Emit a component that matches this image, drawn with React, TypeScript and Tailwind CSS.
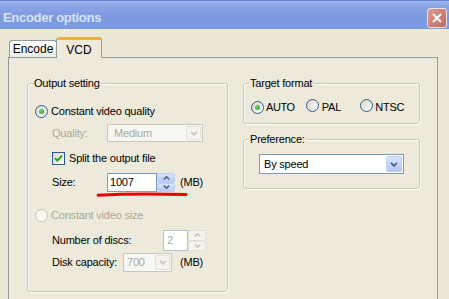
import React from "react";

function Radio({ checked, disabled }: { checked?: boolean; disabled?: boolean }) {
  return (
    <span
      className={
        disabled
          ? "relative inline-block w-[13px] h-[13px] shrink-0 rounded-full border border-[#CAC8BB] bg-[#F7F6F1]"
          : "relative inline-block w-[13px] h-[13px] shrink-0 rounded-full border border-[#2F5A87] bg-[linear-gradient(135deg,#D6D5CC,#FFFFFF)]"
      }
    >
      {checked && (
        <span className="absolute left-[3px] top-[3px] w-[5px] h-[5px] rounded-full bg-[radial-gradient(circle_at_35%_35%,#6CD36C,#21A121)]" />
      )}
    </span>
  );
}

function Checkbox() {
  return (
    <span className="relative inline-flex items-center justify-center w-[13px] h-[13px] shrink-0 border border-[#2F5A87] bg-[linear-gradient(135deg,#D6D5CC,#FFFFFF)]">
      <svg width="9" height="9" viewBox="0 0 9 9">
        <path d="M1 4.2 L3.4 6.6 L8 1.8" fill="none" stroke="#21A121" strokeWidth="2" />
      </svg>
    </span>
  );
}

function Chevron({ color }: { color: string }) {
  return (
    <svg width="8" height="5" viewBox="0 0 8 5">
      <path d="M1 0.8 L4 3.8 L7 0.8" fill="none" stroke={color} strokeWidth="1.8" />
    </svg>
  );
}

function ArrowUp({ color }: { color: string }) {
  return (
    <svg width="7" height="4" viewBox="0 0 7 4">
      <path d="M0.8 3.4 L3.5 0.8 L6.2 3.4" fill="none" stroke={color} strokeWidth="1.5" />
    </svg>
  );
}

function ArrowDown({ color }: { color: string }) {
  return (
    <svg width="7" height="4" viewBox="0 0 7 4">
      <path d="M0.8 0.6 L3.5 3.2 L6.2 0.6" fill="none" stroke={color} strokeWidth="1.5" />
    </svg>
  );
}

function Spinner({ disabled }: { disabled?: boolean }) {
  const btn = disabled
    ? "flex-1 flex items-center justify-center rounded-[2px] border border-[#E3E1D6] bg-[#F4F3EE]"
    : "flex-1 flex items-center justify-center rounded-[2px] border border-[#BCCDF3] bg-[linear-gradient(180deg,#D8E4FB,#B7CAF5)]";
  const c = disabled ? "#C9C7BA" : "#4D6185";
  return (
    <div className="flex flex-col w-[18px] h-full gap-0">
      <div className={btn}>
        <ArrowUp color={c} />
      </div>
      <div className={btn}>
        <ArrowDown color={c} />
      </div>
    </div>
  );
}

export default function App() {
  return (
    <div className="w-[449px] h-[299px] overflow-hidden bg-[#ECE9D8] font-['Liberation_Sans',Arial,sans-serif] text-[11px] tracking-[-0.2px] text-black flex flex-col">
      {/* Title bar */}
      <div className="h-[29px] shrink-0 flex items-center justify-between pt-[5px] pl-[3px] pr-[2px] bg-[linear-gradient(180deg,#9FB6EC_0%,#8AA5E6_20%,#7C98DF_60%,#7F9BE0_100%)] border-t border-[#6A86D0]">
        <span className="text-[13px] font-bold tracking-[-0.3px] text-[#D9E3F7] leading-none">
          Encoder options
        </span>
        <div className="w-[20px] h-[20px] rounded-[3px] border border-[#F1E3E3] bg-[linear-gradient(135deg,#D99A92,#C56A5F)] flex items-center justify-center">
          <svg width="12" height="12" viewBox="0 0 12 12">
            <path d="M2 2 L10 10 M10 2 L2 10" stroke="#FFFFFF" strokeWidth="2" />
          </svg>
        </div>
      </div>

      {/* Body */}
      <div className="flex-1 flex flex-col pt-[9px] pl-[8px] pr-[11px]">
        {/* tabs */}
        <div className="relative z-10 flex items-end h-[20px] mb-[-1px] pl-[1px]">
          <div className="h-[17px] w-[48px] border border-b-0 border-[#919B9C] rounded-t-[3px] bg-[linear-gradient(180deg,#FFFFFF,#ECEBE5)] flex items-center justify-center text-[12px] tracking-[0px] mb-[1px]">
            Encode
          </div>
          <div className="h-[21px] w-[46px] ml-[-1px] border border-b-0 border-[#919B9C] border-t-[3px] border-t-[#F0B03C] rounded-t-[3px] bg-[#EDEADB] flex items-start justify-center pt-[1px] text-[12px] tracking-[0px]">
            VCD
          </div>
        </div>

        {/* panel */}
        <div className="flex-1 border border-[#919B9C] border-b-0 bg-[#EDEADB] flex pt-[25px] pl-[18px]">
          {/* Output setting */}
          <div className="relative w-[201px] h-[209px] border border-[#CAC6B4] rounded-[3px] shadow-[inset_1px_1px_0_#FFFFFF,1px_1px_0_#FFFFFF] flex flex-col">
            <span className="absolute -top-[7px] left-[5px] px-[1px] bg-[#EDEADB] leading-[13px]">
              Output setting
            </span>

            <div className="mt-[21px] ml-[7px] h-[13px] flex items-center gap-[3px]">
              <Radio checked />
              <span>Constant video quality</span>
            </div>

            <div className="mt-[6px] ml-[24px] h-[18px] flex items-center">
              <span className="w-[55px] text-[#ACA899]">Quality:</span>
              <div className="w-[96px] h-[18px] border border-[#C9C7BA] bg-[#F7F7F3] flex items-center justify-between pl-[6px] pr-[1px]">
                <span className="text-[#ACA899]">Medium</span>
                <div className="w-[15px] h-[14px] rounded-[2px] border border-[#E3E1D6] bg-[#F4F3EE] flex items-center justify-center">
                  <Chevron color="#C9C7BA" />
                </div>
              </div>
            </div>

            <div className="mt-[10px] ml-[24px] h-[13px] flex items-center gap-[4px]">
              <Checkbox />
              <span>Split the output file</span>
            </div>

            <div className="mt-[8px] ml-[24px] h-[19px] flex items-center">
              <span className="w-[55px]">Size:</span>
              <div className="w-[50px] h-[19px] border border-[#7F9DB9] bg-white flex items-center pl-[2px]">
                1007
              </div>
              <div className="h-[19px] py-[0px]">
                <Spinner />
              </div>
              <span className="ml-[5px]">(MB)</span>
            </div>

            <div className="mt-[17px] ml-[7px] h-[13px] flex items-center gap-[3px]">
              <Radio disabled />
              <span className="text-[#ACA899]">Constant video size</span>
            </div>

            <div className="mt-[8px] ml-[24px] h-[21px] flex items-center">
              <span className="w-[111px]">Number of discs:</span>
              <div className="w-[25px] h-[21px] border border-[#B2C3D6] bg-white flex items-center pl-[3px] text-[#ACA899]">
                2
              </div>
              <div className="h-[21px]">
                <Spinner disabled />
              </div>
            </div>

            <div className="mt-[2px] ml-[24px] h-[19px] flex items-center">
              <span className="w-[71px]">Disk capacity:</span>
              <div className="w-[49px] h-[19px] border border-[#C9C7BA] bg-[#F7F7F3] flex items-center justify-between pl-[3px] pr-[1px]">
                <span className="text-[#ACA899]">700</span>
                <div className="w-[15px] h-[15px] rounded-[2px] border border-[#E3E1D6] bg-[#F4F3EE] flex items-center justify-center">
                  <Chevron color="#C9C7BA" />
                </div>
              </div>
              <span className="ml-[8px]">(MB)</span>
            </div>

            {/* red annotation stroke */}
            <svg
              className="absolute left-[68px] top-[107px]"
              width="92"
              height="7"
              viewBox="0 0 92 7"
            >
              <path d="M2 4.2 C 30 2.6, 60 2.6, 90 3.6" fill="none" stroke="#E4060A" strokeWidth="3" strokeLinecap="round" />
            </svg>
          </div>

          {/* right column */}
          <div className="ml-[15px] w-[177px] flex flex-col">
            <div className="relative h-[41px] border border-[#CAC6B4] rounded-[3px] shadow-[inset_1px_1px_0_#FFFFFF,1px_1px_0_#FFFFFF] flex items-start pt-[17px] pl-[7px]">
              <span className="absolute -top-[7px] left-[5px] px-[1px] bg-[#EDEADB] leading-[13px]">
                Target format
              </span>
              <div className="flex items-center h-[13px]">
                <Radio checked />
                <span className="ml-[2px] tracking-[-0.4px]">AUTO</span>
                <span className="ml-[11px]">
                  <Radio />
                </span>
                <span className="ml-[3px]">PAL</span>
                <span className="ml-[19px]">
                  <Radio />
                </span>
                <span className="ml-[2px]">NTSC</span>
              </div>
            </div>

            <div className="relative mt-[15px] h-[50px] border border-[#CAC6B4] rounded-[3px] shadow-[inset_1px_1px_0_#FFFFFF,1px_1px_0_#FFFFFF] pt-[14px] pl-[15px]">
              <span className="absolute -top-[7px] left-[5px] px-[1px] bg-[#EDEADB] leading-[13px]">
                Preference:
              </span>
              <div className="w-[145px] h-[20px] border border-[#7F9DB9] bg-white flex items-center justify-between pl-[4px] pr-[1px]">
                <span>By speed</span>
                <div className="w-[16px] h-[16px] rounded-[2px] border border-[#BCCDF3] bg-[linear-gradient(180deg,#D8E4FB,#B3C7F5)] flex items-center justify-center">
                  <Chevron color="#4D6185" />
                </div>
              </div>
            </div>
          </div>
        </div>
      </div>
    </div>
  );
}
